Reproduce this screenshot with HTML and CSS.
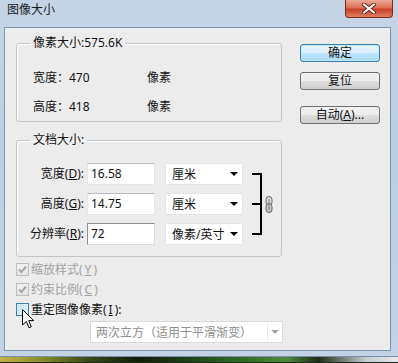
FILE: index.html
```html
<!DOCTYPE html>
<html>
  <head>
    <meta charset="utf-8" />
    <title>图像大小</title>
    <link rel="stylesheet" href="styles.css">
  </head>
  <body>
    <div class="window">
      <div class="titlebar">
        <span class="title">图像大小</span>
        <span class="close">
          <svg width="14" height="11" viewBox="0 0 14 11">
            <path d="M2 1.5 L12 9.5 M12 1.5 L2 9.5" stroke="#6b2015" stroke-width="4" stroke-linecap="round" />
            <path d="M2 1.5 L12 9.5 M12 1.5 L2 9.5" stroke="#fff" stroke-width="2.2" stroke-linecap="round" />
          </svg>
        </span>
      </div>

      <div class="client">
        <div class="main">
          <!-- pixel dimensions -->
          <fieldset class="group pixel">
            <legend>像素大小:575.6K</legend>
            <div class="pixel-row"><span>宽度：</span><span>470</span><span>像素</span></div>
            <div class="pixel-row"><span>高度：</span><span>418</span><span>像素</span></div>
          </fieldset>

          <!-- document size -->
          <fieldset class="group doc">
            <legend>文档大小:</legend>
            <div class="doc-grid">
              <label>宽度(<u>D</u>):</label>
              <div class="field">16.58</div>
              <div class="select">厘米<i class="arrow"></i></div>

              <div class="link">
                <div class="bracket"></div>
                <svg class="chain" width="8" height="17" viewBox="0 0 8 17">
                  <rect x="1" y="0.5" width="6" height="9" rx="3" fill="#d8d8d8" stroke="#6a6a6a" />
                  <rect x="1" y="7.5" width="6" height="9" rx="3" fill="#c4c4c4" stroke="#6a6a6a" />
                  <line x1="4" y1="3" x2="4" y2="14" stroke="#808080" />
                </svg>
              </div>

              <label>高度(<u>G</u>):</label>
              <div class="field">14.75</div>
              <div class="select">厘米<i class="arrow"></i></div>

              <label>分辨率(<u>R</u>):</label>
              <div class="field focus">72</div>
              <div class="select">像素/英寸<i class="arrow"></i></div>
            </div>
          </fieldset>

          <div class="checks">
            <div class="check disabled">
              <span class="box"><svg width="11" height="11" viewBox="0 0 11 11"><path d="M2 5.5 L4.5 8 L9 2.5" stroke="#a8a8a8" stroke-width="2" fill="none" /></svg></span>
              缩放样式(<u>Y</u>)
            </div>
            <div class="check disabled">
              <span class="box"><svg width="11" height="11" viewBox="0 0 11 11"><path d="M2 5.5 L4.5 8 L9 2.5" stroke="#a8a8a8" stroke-width="2" fill="none" /></svg></span>
              约束比例(<u>C</u>)
            </div>
            <div class="check">
              <span class="box hover"></span>
              重定图像像素(<u>I</u>):
            </div>
          </div>

          <div class="select wide">两次立方（适用于平滑渐变）<span class="arrow-box"><i class="arrow"></i></span></div>
        </div>

        <div class="buttons">
          <button class="default" type="button">确定</button>
          <button type="button">复位</button>
          <button class="auto" type="button">自动(<u>A</u>)...</button>
        </div>
      </div>
    </div>
    <div class="desktop"></div>

    <!-- mouse pointer over the checkbox -->
    <svg class="cursor" width="13" height="20" viewBox="0 0 13 20">
      <path d="M0.5 0.5 L0.5 16 L4.3 12.4 L7 18.8 L9.3 17.8 L6.7 11.6 L11.7 11.6 Z" fill="#fff" stroke="#000" stroke-linejoin="round" />
    </svg>
  </body>
</html>
```

FILE: styles.css
```css
/* Windows 7 style "Image Size" dialog */
body {
  margin: 0;
  width: 398px;
  height: 363px;
  overflow: hidden;
  position: relative;
  background-color: #1d2a14;
  font-family: "Noto Sans", "Noto Sans CJK SC", sans-serif;
  font-size: 12px;
  color: #111;
}
.window {
  box-sizing: border-box;
  height: 357px;
  padding: 0 7px 5px 4px;
  background: linear-gradient(to bottom, #c5d4e5, #bccee2 40%, #c3d3e5);
  border-bottom: 1px solid #7b8ea3;
  display: flex;
  flex-direction: column;
}
.titlebar {
  height: 27px;
  display: flex;
  justify-content: space-between;
  align-items: flex-start;
}
.title {
  padding-left: 3px;
  line-height: 20px;
  color: #1b1b1b;
}
.close {
  box-sizing: border-box;
  width: 48px;
  height: 18px;
  margin-right: -2px;
  display: flex;
  align-items: center;
  justify-content: center;
  border: 1px solid #7d2a1b;
  border-top: none;
  border-radius: 0 0 4px 4px;
  background: linear-gradient(to bottom, #eba996, #dc6f55 45%, #c8422a 55%, #e07e60);
}
.client {
  flex: 1;
  display: flex;
  background-color: #ececec;
  border: 1px solid #8194a9;
  box-shadow: 1px 1px 0 #e8f0f8 inset;
}
.main {
  width: 266px;
  padding: 7px 0 0 11px;
}
.group {
  margin: 0;
  padding: 0;
  border: 1px solid #c2c7cc;
  border-radius: 3px;
  box-shadow: 1px 1px 0 #fff inset;
}
.group legend {
  margin-left: 13px;
  padding: 0 3px;
  line-height: 16px;
}
.pixel-row {
  display: grid;
  grid-template-columns: 36px 78px auto;
  height: 29px;
  line-height: 29px;
  padding-left: 16px;
}
.pixel {
  padding-top: 12px;
}
.doc {
  margin-top: 10px;
}
.doc-grid {
  display: grid;
  grid-template-columns: 70px 78px 87px auto;
  grid-auto-rows: 22px;
  row-gap: 8px;
  padding: 15px 0 11px;
}
.doc-grid label {
  text-align: right;
  padding-right: 3px;
  line-height: 22px;
}
.field {
  box-sizing: border-box;
  width: 68px;
  padding-left: 3px;
  line-height: 20px;
  background-color: #fff;
  border: 1px solid #e2e7ec;
  border-top-color: #b9bcc1;
}
.field.focus {
  border-color: #8d9096;
  border-right-color: #d7dbe0;
  border-bottom-color: #d7dbe0;
}
.select {
  box-sizing: border-box;
  width: 78px;
  display: flex;
  align-items: center;
  padding-left: 6px;
  background-color: #fff;
  border: 1px solid #e4e4e4;
}
.arrow {
  margin-left: auto;
  margin-right: 4px;
  width: 0;
  height: 0;
  border-left: 4px solid transparent;
  border-right: 4px solid transparent;
  border-top: 4px solid #000;
}
.link {
  grid-column: 4;
  grid-row: 1 / 4;
  display: flex;
  align-items: center;
}
.bracket {
  width: 8px;
  height: 58px;
  border: 2px solid #000;
  border-left: none;
  background: linear-gradient(#000, #000) left center / 8px 2px no-repeat;
}
.chain {
  margin-left: 3px;
}
.checks {
  margin-top: 2px;
}
.check {
  height: 20px;
  display: flex;
  align-items: center;
  gap: 2px;
}
.check.disabled {
  color: #a2a2a2;
}
.box {
  box-sizing: border-box;
  width: 13px;
  height: 13px;
  display: flex;
  align-items: center;
  justify-content: center;
  border: 1px solid #bdbdbd;
  background: linear-gradient(to bottom, #f1f1f1, #e4e4e4);
}
.box.hover {
  border-color: #3c7fb1;
  background: linear-gradient(to bottom right, #bfe2f8, #e9f6fd);
  box-shadow: 0 0 0 1px #deeefb inset;
}
.select.wide {
  width: 193px;
  height: 22px;
  margin: 2px 0 0 74px;
  padding-left: 5px;
  color: #8e8e8e;
  border-color: #d9d9d9;
}
.arrow-box {
  margin-left: auto;
  height: 18px;
  width: 14px;
  display: flex;
  align-items: center;
  border-left: 1px solid #ececec;
}
.arrow-box .arrow {
  margin: 0 auto;
  border-top-color: #a6a6a6;
}
.buttons {
  margin-left: 18px;
  padding-top: 16px;
  display: flex;
  flex-direction: column;
}
.buttons button {
  box-sizing: border-box;
  width: 80px;
  height: 18px;
  margin-bottom: 10px;
  padding: 0;
  font-family: inherit;
  font-size: 12px;
  line-height: 16px;
  color: #111;
  border: 1px solid #707070;
  border-radius: 3px;
  background: linear-gradient(to bottom, #f2f2f2, #ebebeb 50%, #dddddd 51%, #cfcfcf);
}
.buttons button.default {
  border-color: #3c7fb1;
  box-shadow: 0 0 0 1px #bde6fd inset;
  background: linear-gradient(to bottom, #eaf6fd, #d9f0fc 50%, #bee6fd 51%, #a7d9f5);
}
.buttons button.auto {
  margin-top: 6px;
}
.desktop {
  height: 5px;
  background: linear-gradient(to right, #c8b248, #8a8f2c 10%, #3b4a1a 22%, #101a0c 35%, #2f6a26 60%, #4c8a3c 72%, #1f2a18 80%, #c9ced2 92%, #e6e8ea);
}
.cursor {
  position: absolute;
  left: 22px;
  top: 309px;
}
```
